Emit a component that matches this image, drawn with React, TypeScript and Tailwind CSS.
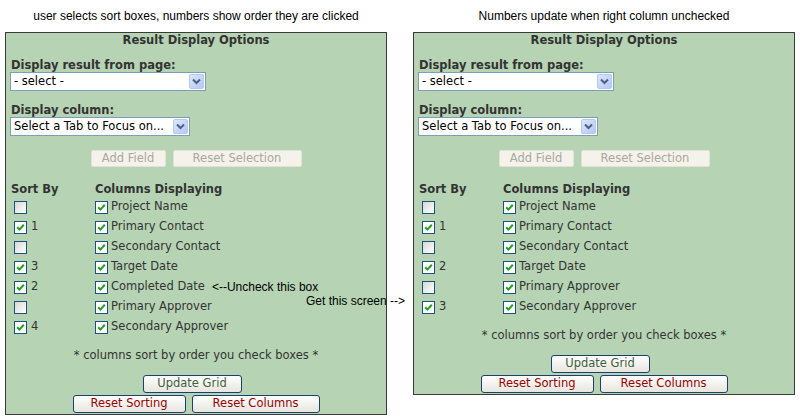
import React from 'react';

type Row = { label: string; sort: number | null; note?: string };

const leftRows: Row[] = [
  { label: 'Project Name', sort: null },
  { label: 'Primary Contact', sort: 1 },
  { label: 'Secondary Contact', sort: null },
  { label: 'Target Date', sort: 3 },
  { label: 'Completed Date', sort: 2, note: '<--Uncheck this box' },
  { label: 'Primary Approver', sort: null },
  { label: 'Secondary Approver', sort: 4 },
];

const rightRows: Row[] = [
  { label: 'Project Name', sort: null },
  { label: 'Primary Contact', sort: 1 },
  { label: 'Secondary Contact', sort: null },
  { label: 'Target Date', sort: 2 },
  { label: 'Primary Approver', sort: null },
  { label: 'Secondary Approver', sort: 3 },
];

function CheckBox({ checked }: { checked: boolean }) {
  return (
    <span
      className={`inline-flex h-[13px] w-[13px] shrink-0 items-center justify-center border border-[#1c5180] ${
        checked ? 'bg-white' : 'bg-gradient-to-br from-[#d8d8d2] to-white'
      }`}
    >
      {checked && (
        <svg width="9" height="9" viewBox="0 0 9 9">
          <path d="M1.2 4.2 L3.4 6.6 L7.8 1.8" stroke="#21a121" strokeWidth="2" fill="none" />
        </svg>
      )}
    </span>
  );
}

function Select({ text, width }: { text: string; width: string }) {
  return (
    <div className={`flex h-[19px] items-center border border-[#7f9db9] bg-white ${width}`}>
      <span className="flex-1 truncate pl-[3px] text-[11.5px] leading-[17px] text-black">{text}</span>
      <span className="mr-[1px] flex h-[15px] w-[15px] items-center justify-center rounded-[2px] border border-[#b7c9ef] bg-gradient-to-br from-[#dce6fd] to-[#b4c8f6]">
        <svg width="9" height="7" viewBox="0 0 9 7">
          <path d="M1 1.5 L4.5 5 L8 1.5" stroke="#4d6185" strokeWidth="2" fill="none" />
        </svg>
      </span>
    </div>
  );
}

function XpButton({ children, width, red }: { children: React.ReactNode; width: string; red?: boolean }) {
  return (
    <div
      className={`flex h-[18px] items-center justify-center rounded-[3px] border border-[#1b3f6f] bg-gradient-to-b from-white to-[#e6e5de] text-[11.5px] leading-none ${width} ${
        red ? 'text-[#9a0000]' : 'text-[#3f5f3f]'
      }`}
    >
      {children}
    </div>
  );
}

function DisabledButton({ children, width }: { children: React.ReactNode; width: string }) {
  return (
    <div
      className={`flex h-[17px] items-center justify-center rounded-[2px] border border-[#e4e1d6] bg-[#f4f2ea] text-[11.5px] leading-none text-[#a8a8a0] ${width}`}
    >
      {children}
    </div>
  );
}

function Panel({ rows }: { rows: Row[] }) {
  return (
    <div className="w-[382px] border border-[#3a3a3a] bg-[#b6d4b4] px-[5px] pb-[1px] text-[11.5px] text-[#333]">
      <div className="text-center font-bold leading-[15px]">Result Display Options</div>

      <div className="mt-[10px] font-bold leading-[14px]">Display result from page:</div>
      <Select text="- select -" width="w-[196px] -ml-[1px]" />

      <div className="mt-[12px] font-bold leading-[14px]">Display column:</div>
      <Select text="Select a Tab to Focus on..." width="w-[180px] -ml-[1px]" />

      <div className="mt-[14px] flex justify-center gap-[7px]">
        <DisabledButton width="w-[75px]">Add Field</DisabledButton>
        <DisabledButton width="w-[129px]">Reset Selection</DisabledButton>
      </div>

      <div className="mt-[15px] flex font-bold leading-[14px]">
        <span className="w-[84px]">Sort By</span>
        <span>Columns Displaying</span>
      </div>

      <div className="mt-[1px]">
        {rows.map((r) => (
          <div key={r.label} className="flex h-[20px] items-center">
            <div className="flex w-[84px] items-center gap-[4px] pl-[3px]">
              <CheckBox checked={r.sort !== null} />
              {r.sort !== null && <span>{r.sort}</span>}
            </div>
            <CheckBox checked />
            <span className="ml-[3px]">{r.label}</span>
            {r.note && (
              <span className="ml-[7px] font-['Liberation_Sans',Arial,sans-serif] text-[12px] text-black">{r.note}</span>
            )}
          </div>
        ))}
      </div>

      <div className="mt-[11px] text-center leading-[14px]">* columns sort by order you check boxes *</div>

      <div className="mt-[13px] flex justify-center pr-[8px]">
        <XpButton width="w-[99px]">Update Grid</XpButton>
      </div>
      <div className="mt-[2px] flex justify-center gap-[6px]">
        <XpButton width="w-[113px]" red>
          Reset Sorting
        </XpButton>
        <XpButton width="w-[128px]" red>
          Reset Columns
        </XpButton>
      </div>
    </div>
  );
}

export default function App() {
  return (
    <div className="relative h-[420px] w-[800px] overflow-hidden bg-white font-['DejaVu_Sans',Verdana,sans-serif]">
      <div className="flex items-start gap-[26px] pl-[5px]">
        <div className="w-[382px]">
          <div className="flex h-[32px] items-center justify-center font-['Liberation_Sans',Arial,sans-serif] text-[12px] text-black">
            user selects sort boxes, numbers show order they are clicked
          </div>
          <Panel rows={leftRows} />
        </div>
        <div className="w-[382px]">
          <div className="flex h-[32px] items-center justify-center font-['Liberation_Sans',Arial,sans-serif] text-[12px] text-black">
            Numbers update when right column unchecked
          </div>
          <Panel rows={rightRows} />
        </div>
      </div>
      <span className="absolute left-[306px] top-[294px] font-['Liberation_Sans',Arial,sans-serif] text-[12px] leading-[14px] text-black">
        Get this screen --&gt;
      </span>
    </div>
  );
}
